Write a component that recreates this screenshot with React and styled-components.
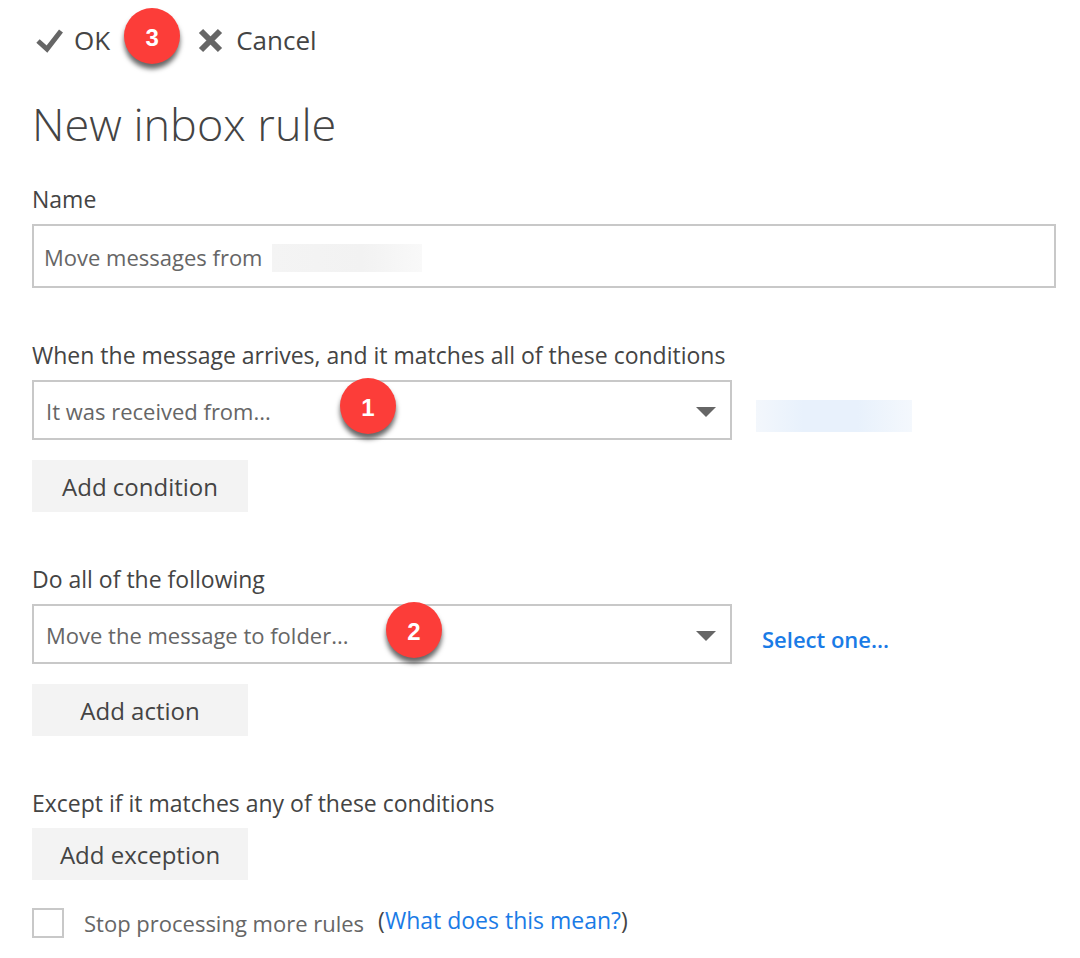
import React, { useState } from 'react'
import styled, { createGlobalStyle } from 'styled-components';

const GlobalStyle = createGlobalStyle`
  * {
    box-sizing: border-box;
  }
  body {
    margin: 0;
    background: #fff;
    color: #444;
    font-family: "Open Sans", "Noto Sans", sans-serif;
    font-size: 22px;
    line-height: 32px;
  }
  button, input, select {
    font: inherit;
    color: inherit;
  }
`;

const Page = styled.form`
  padding: 8px 24px 20px 32px;
`;

const Toolbar = styled.div`
  display: flex;
  align-items: center;
  height: 64px;
`;

const ToolButton = styled.button`
  display: flex;
  align-items: center;
  gap: 10px;
  padding: 0;
  border: 0;
  background: none;
  font-size: 26px;
  cursor: pointer;

  svg {
    display: block;
    width: 32px;
    height: 32px;
  }
`;

const Badge = styled.span`
  display: flex;
  flex: none;
  align-items: center;
  justify-content: center;
  width: 56px;
  height: 56px;
  padding-top: 4px;
  border-radius: 50%;
  background: #fc3d39;
  color: #fff;
  font-family: "Liberation Sans", Arial, sans-serif;
  font-size: 24px;
  font-weight: 700;
  box-shadow: 0 5px 5px rgba(0, 0, 0, 0.6);
`;

const ToolbarBadge = styled(Badge)`
  margin: 0 14px 8px;
`;

const FieldBadge = styled(Badge)`
  position: absolute;
  top: -2px;
  left: ${props => props.$left}px;
  pointer-events: none;
`;

const Title = styled.h1`
  margin: 20px 0 27px;
  font-size: 45px;
  font-weight: 300;
  line-height: 64px;
`;

const Section = styled.section`
  display: flex;
  flex-direction: column;
  align-items: flex-start;
  margin-bottom: ${props => props.$last ? 24 : 51}px;
`;

const Label = styled.label`
  margin-bottom: 9px;
  font-size: 23px;
`;

const InputBox = styled.div`
  position: relative;
  width: 100%;
`;

const TextInput = styled.input`
  display: block;
  width: 100%;
  height: 64px;
  padding: 2px 10px 0;
  border: 2px solid #c8c8c8;
  border-radius: 0;
  background: #fff;
  color: #666;
`;

const HiddenName = styled.span`
  position: absolute;
  top: 20px;
  left: 240px;
  width: 150px;
  height: 28px;
  background: linear-gradient(90deg, #f4f4f4, #f2f2f2 60%, #f9f9f9);
`;

const Row = styled.div`
  display: flex;
  align-items: center;
  width: 100%;
  margin-bottom: 20px;
`;

const SelectBox = styled.div`
  position: relative;
  flex: 0 1 700px;
`;

const Select = styled.select`
  display: block;
  width: 100%;
  height: 60px;
  padding: 2px 48px 0 12px;
  border: 2px solid #c8c8c8;
  border-radius: 0;
  background: #fff;
  color: #666;
  appearance: none;
`;

const Caret = styled.svg`
  position: absolute;
  top: 27px;
  right: 16px;
  width: 20px;
  height: 10px;
  fill: #666;
  pointer-events: none;
`;

const HiddenSender = styled.span`
  width: 156px;
  height: 32px;
  margin: 12px 0 0 24px;
  background: linear-gradient(90deg, #f3f7fc, #e8f1fc 30%, #e8f1fc 65%, #f4f8fd);
`;

const Link = styled.a`
  color: #1a7be6;
  text-decoration: none;
`;

const FolderLink = styled(Link)`
  margin: 10px 0 0 30px;
  font-weight: 600;
`;

const AddButton = styled.button`
  width: 216px;
  height: 52px;
  padding: 2px 0 0;
  border: 0;
  background: #f3f3f3;
  font-size: 24px;
  cursor: pointer;
`;

const StopRow = styled.div`
  display: flex;
  align-items: center;
`;

const Checkbox = styled.input`
  flex: none;
  width: 32px;
  height: 30px;
  margin: 0 20px 0 0;
  border: 2px solid #c8c8c8;
  background: #fff;
  appearance: none;

  &:checked {
    background: #666;
  }
`;

const StopLabel = styled.label`
  color: #666;
`;

const Help = styled.span`
  margin: 0 0 6px 14px;
  font-size: 23px;
`;

const Dropdown = ({ id, options, badge, badgeLeft }) => (
  <SelectBox>
    <Select id={id}>
      {options.map(option => <option key={option}>{option}</option>)}
    </Select>
    <Caret viewBox="0 0 20 10"><path d="M0 0h20L10 10z" /></Caret>
    <FieldBadge $left={badgeLeft}>{badge}</FieldBadge>
  </SelectBox>
)

const App = () => {
  const [name, setName] = useState('Move messages from');
  const [stop, setStop] = useState(false);

  return (
    <>
      <GlobalStyle />
      <Page onSubmit={e => e.preventDefault()}>
        <Toolbar>
          <ToolButton type="submit">
            <svg viewBox="0 0 32 32" fill="none" stroke="#666" strokeWidth="5">
              <path d="M6 17l9 8L29 7" />
            </svg>
            OK
          </ToolButton>
          <ToolbarBadge>3</ToolbarBadge>
          <ToolButton type="button">
            <svg viewBox="0 0 32 32" fill="none" stroke="#666" strokeWidth="6">
              <path d="M7 7l19 19M26 7L7 26" />
            </svg>
            Cancel
          </ToolButton>
        </Toolbar>

        <Title>New inbox rule</Title>

        <Section>
          <Label htmlFor="name">Name</Label>
          <InputBox>
            <TextInput id="name" value={name} onChange={e => setName(e.target.value)} />
            <HiddenName />
          </InputBox>
        </Section>

        <Section>
          <Label htmlFor="condition">When the message arrives, and it matches all of these conditions</Label>
          <Row>
            <Dropdown id="condition" options={['It was received from...']} badge="1" badgeLeft={308} />
            <HiddenSender />
          </Row>
          <AddButton type="button">Add condition</AddButton>
        </Section>

        <Section>
          <Label htmlFor="action">Do all of the following</Label>
          <Row>
            <Dropdown id="action" options={['Move the message to folder...']} badge="2" badgeLeft={354} />
            <FolderLink href="#folder">Select one...</FolderLink>
          </Row>
          <AddButton type="button">Add action</AddButton>
        </Section>

        <Section $last>
          <Label htmlFor="exception">Except if it matches any of these conditions</Label>
          <AddButton id="exception" type="button">Add exception</AddButton>
        </Section>

        <StopRow>
          <Checkbox id="stop" type="checkbox" checked={stop} onChange={e => setStop(e.target.checked)} />
          <StopLabel htmlFor="stop">Stop processing more rules</StopLabel>
          <Help>(<Link href="#help">What does this mean?</Link>)</Help>
        </StopRow>
      </Page>
    </>
  )
}

export default App;
